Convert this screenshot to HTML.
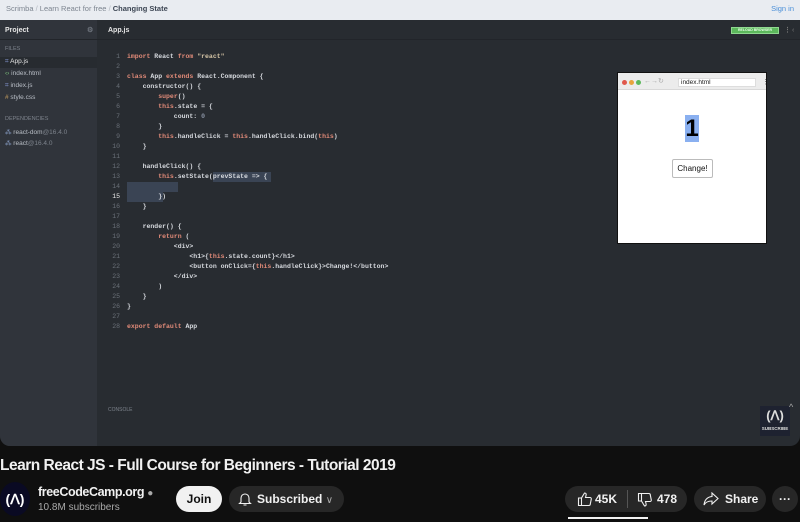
<!DOCTYPE html>
<html><head><meta charset="utf-8"><style>
*{margin:0;padding:0;box-sizing:border-box}
body{width:800px;height:522px;background:#0f0f0f;overflow:hidden;font-family:"Liberation Sans",sans-serif;position:relative}
.vid{position:absolute;left:0;top:0;width:800px;height:446px;background:#282c31;border-radius:0 0 10px 10px;overflow:hidden}
.top{position:absolute;left:0;top:0;width:800px;height:20px;background:#e9ecf1;font-size:7.5px;color:#7d8590;line-height:18px;padding-left:6px}
.top b{color:#3d4654}
.top .sign{position:absolute;right:6px;top:0;color:#4a8fd8}
.side{position:absolute;left:0;top:20px;width:97px;height:426px;background:#30343b}
.hdr{position:absolute;top:20px;left:0;width:800px;height:20px;border-bottom:1px solid #22252a;font-size:7px;color:#e6e6e6;line-height:21px;font-weight:bold}
.s{position:absolute;font-size:6.5px;color:#b9bec6}
.lab{position:absolute;font-size:5.5px;color:#7d838c}
.code{position:absolute;left:0;top:52px;font-family:"Liberation Mono",monospace;font-size:6.5px;line-height:10px;color:#d6d9de;white-space:pre;font-weight:bold}
.ln{position:absolute;top:0;left:104px;width:16px;text-align:right;color:#6a7078;font-weight:normal}
.cd{position:absolute;top:0;left:127px}
.k{color:#e08a78}.st{color:#d2c2a4}.n{color:#8a93a4}
.sel{position:absolute;background:#3a4454}
.br{position:absolute;left:617px;top:72px;width:150px;height:172px;background:#fff;border:1px solid #111}
.btn{position:absolute;height:26px;top:486px;border-radius:13px;background:#272727;color:#f1f1f1;font-size:12px;font-weight:bold;line-height:26px}
</style></head><body>
<div class="vid">
<div class="top">Scrimba <span style="color:#b0b6be">/</span> Learn React for free <span style="color:#b0b6be">/</span> <b>Changing State</b><span class="sign">Sign in</span></div>
<div class="side"></div>
<div class="hdr"><span style="position:absolute;left:5px">Project</span><span style="position:absolute;left:87px;color:#6d737c">⚙</span><span style="position:absolute;left:108px">App.js</span>
<span style="position:absolute;left:731px;top:7px;width:48px;height:7px;background:#5cb85c;border:1px solid #8fd88f;font-size:3.5px;line-height:5px;text-align:center;color:#e8ffe8">RELOAD BROWSER</span>
<span style="position:absolute;left:784px;color:#777">⋮</span><span style="position:absolute;left:792px;color:#777;font-weight:normal">‹</span></div>
<div class="lab" style="left:5px;top:46px">FILES</div>
<div style="position:absolute;left:0;top:57px;width:97px;height:11px;background:#272b30"></div>
<div class="s" style="left:5px;top:58px;color:#e8e8e8"><span style="color:#7a8ac0">⌗</span> App.js</div>
<div class="s" style="left:5px;top:70px"><span style="color:#7bbf7b">‹›</span> index.html</div>
<div class="s" style="left:5px;top:82px"><span style="color:#7a8ac0">⌗</span> index.js</div>
<div class="s" style="left:5px;top:94px"><span style="color:#c9a060">#</span> style.css</div>
<div class="lab" style="left:5px;top:116px">DEPENDENCIES</div>
<div class="s" style="left:5px;top:128px"><span style="color:#8aa0c8">⁂</span> react-dom<span style="color:#7d838c">@16.4.0</span></div>
<div class="s" style="left:5px;top:139px"><span style="color:#8aa0c8">⁂</span> react<span style="color:#7d838c">@16.4.0</span></div>
<div class="sel" style="left:213px;top:172px;width:58px;height:10px"></div>
<div class="sel" style="left:127px;top:182px;width:51px;height:10px"></div>
<div class="sel" style="left:127px;top:192px;width:36px;height:10px"></div>
<div class="code"><div class="ln">1
2
3
4
5
6
7
8
9
10
11
12
13
14
<span style="color:#e8e8e8">15</span>
16
17
18
19
20
21
22
23
24
25
26
27
28</div><div class="cd"><span class="k">import</span> React <span class="k">from</span> <span class="st">"react"</span>

<span class="k">class</span> App <span class="k">extends</span> React.Component {
    constructor() {
        <span class="k">super</span>()
        <span class="k">this</span>.state = {
            count: <span class="n">0</span>
        }
        <span class="k">this</span>.handleClick = <span class="k">this</span>.handleClick.bind(<span class="k">this</span>)
    }

    handleClick() {
        <span class="k">this</span>.setState(prevState => {

        })
    }

    render() {
        <span class="k">return</span> (
            &lt;div&gt;
                &lt;h1&gt;{<span class="k">this</span>.state.count}&lt;/h1&gt;
                &lt;button onClick={<span class="k">this</span>.handleClick}&gt;Change!&lt;/button&gt;
            &lt;/div&gt;
        )
    }
}

<span class="k">export default</span> App</div></div>
<div class="br">
<div style="position:absolute;left:0;top:0;width:148px;height:17px;background:#ececec;border-bottom:1px solid #d8d8d8"></div>
<div style="position:absolute;left:4px;top:7px;width:5px;height:5px;border-radius:50%;background:#e0584c"></div>
<div style="position:absolute;left:11px;top:7px;width:5px;height:5px;border-radius:50%;background:#e8a43c"></div>
<div style="position:absolute;left:18px;top:7px;width:5px;height:5px;border-radius:50%;background:#5cb85c"></div>
<div style="position:absolute;left:26px;top:4px;font-size:7px;color:#aaa">←→↻</div>
<div style="position:absolute;left:60px;top:5px;width:78px;height:9px;background:#fff;border:1px solid #ddd;font-size:6.5px;line-height:8px;padding-left:2px;color:#222">index.html</div>
<div style="position:absolute;left:144px;top:5px;font-size:7px;color:#666">⋮</div>
<div style="position:absolute;left:67px;top:42px;width:14px;height:27px;background:#8ab0f0;font-size:24px;font-weight:bold;line-height:27px;text-align:center;color:#000">1</div>
<div style="position:absolute;left:54px;top:86px;width:41px;height:19px;border:1px solid #bbb;border-radius:2px;font-size:8px;line-height:17px;text-align:center;color:#111">Change!</div>
</div>
<div class="lab" style="left:108px;top:407px;font-size:5px">CONSOLE</div>
<div style="position:absolute;left:760px;top:406px;width:30px;height:30px;background:#1e2230;color:#ddd;text-align:center;font-size:13px;line-height:20px;font-weight:bold">(ᐱ)<div style="font-size:4.5px;line-height:6px">SUBSCRIBE</div></div>
<div style="position:absolute;left:789px;top:402px;color:#aaa;font-size:9px">^</div>
</div>
<div style="position:absolute;left:0;top:457px;font-size:15.5px;font-weight:bold;color:#f1f1f1;letter-spacing:-0.5px">Learn React JS - Full Course for Beginners - Tutorial 2019</div>
<div style="position:absolute;left:0;top:482px;width:30px;height:34px;border-radius:50%;background:#0a0a23;color:#fff;font-size:14px;font-weight:bold;line-height:34px;text-align:center">(ᐱ)</div>
<div style="position:absolute;left:38px;top:485px;font-size:12.5px;font-weight:bold;color:#f1f1f1;letter-spacing:-0.4px">freeCodeCamp.org <span style="color:#aaa;font-size:10px">●</span></div>
<div style="position:absolute;left:38px;top:502px;font-size:10px;color:#aaa">10.8M subscribers</div>
<div class="btn" style="left:176px;width:46px;background:#f1f1f1;color:#0f0f0f;text-align:center">Join</div>
<div class="btn" style="left:229px;width:115px;padding-left:28px">Subscribed <span style="font-weight:normal;color:#aaa;font-size:10px">∨</span>
<svg style="position:absolute;left:9px;top:5px" width="14" height="16" viewBox="0 0 14 16"><path d="M3 11V7a4 4 0 0 1 8 0v4l1.5 1.5h-11z M5.5 14h3" fill="none" stroke="#f1f1f1" stroke-width="1.1"/></svg></div>
<div class="btn" style="left:565px;width:122px">
<svg style="position:absolute;left:12px;top:5px" width="16" height="16" viewBox="0 0 16 16"><path d="M1.5 7h3v7.5h-3z M4.5 7l3-5c1.5 0 2 1 1.5 2.5L8.5 6.5h4.5a1.3 1.3 0 0 1 1.3 1.5l-1 5a1.5 1.5 0 0 1-1.5 1.5H4.5" fill="none" stroke="#f1f1f1" stroke-width="1.1"/></svg>
<span style="position:absolute;left:30px">45K</span>
<div style="position:absolute;left:62px;top:4px;width:1px;height:18px;background:#555"></div>
<svg style="position:absolute;left:72px;top:6px" width="16" height="16" viewBox="0 0 16 16"><path d="M1.5 1.5h3V9h-3z M4.5 9l3 5c1.5 0 2-1 1.5-2.5L8.5 9.5h4.5a1.3 1.3 0 0 0 1.3-1.5l-1-5A1.5 1.5 0 0 0 11.8 1.5H4.5" fill="none" stroke="#f1f1f1" stroke-width="1.1"/></svg>
<span style="position:absolute;left:92px">478</span></div>
<div style="position:absolute;left:568px;top:517px;width:80px;height:2px;background:#f1f1f1"></div>
<div class="btn" style="left:694px;width:72px;padding-left:31px">Share
<svg style="position:absolute;left:9px;top:6px" width="16" height="14" viewBox="0 0 16 14"><path d="M9 1l6 5.5L9 12V9C5 9 2.5 10 1 13c0.5-4.5 3-8 8-8.5z" fill="none" stroke="#f1f1f1" stroke-width="1.1"/></svg></div>
<div class="btn" style="left:772px;width:26px;text-align:center">···</div>
</body></html>
